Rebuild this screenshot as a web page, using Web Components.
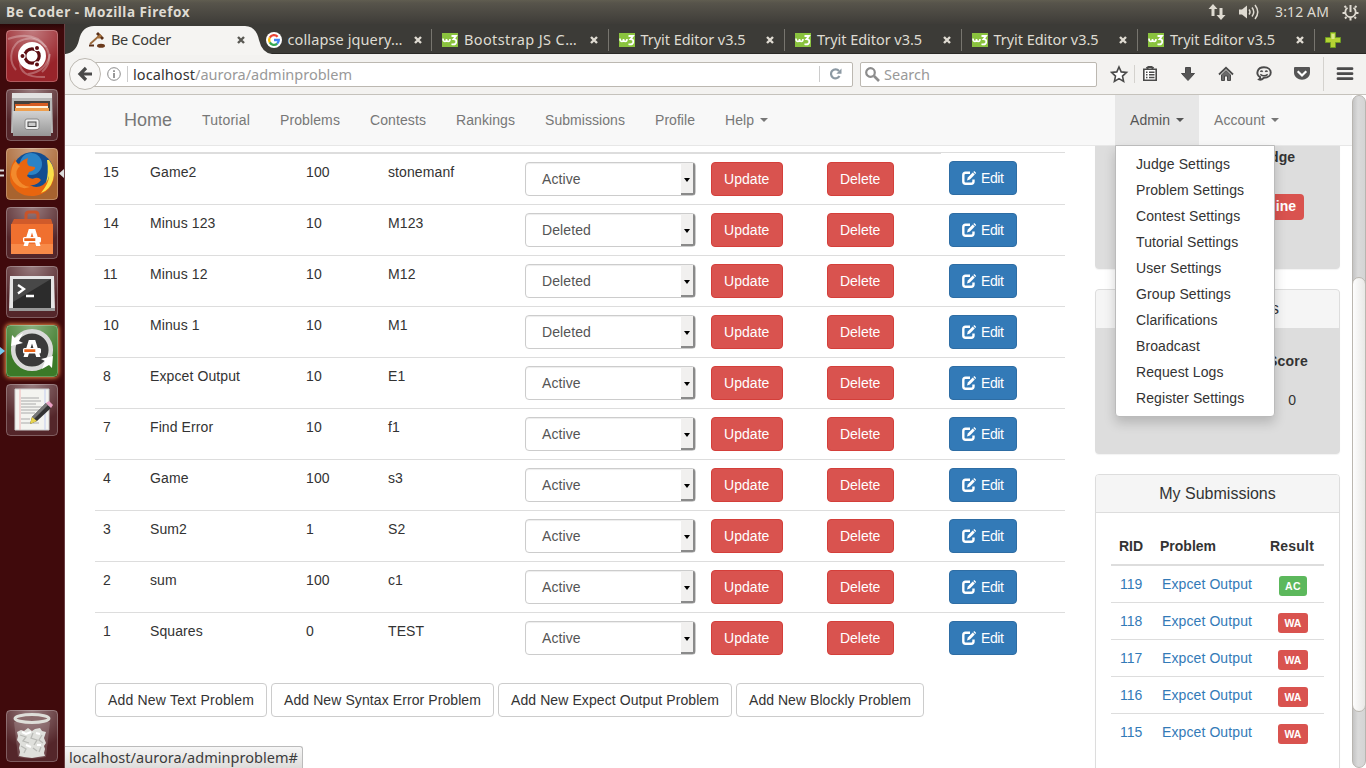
<!DOCTYPE html>
<html lang="en"><head><meta charset="utf-8"><title>Be Coder</title>
<style>
html,body{margin:0;height:100%;overflow:hidden;background:#fff}
body{width:1366px;height:768px;font-family:"Liberation Sans",Arial,sans-serif}
</style></head><body>
<be-desktop></be-desktop>
<script>
const def=(name,css,html,after)=>customElements.define(name,class extends HTMLElement{
  connectedCallback(){
    if(this.shadowRoot)return;
    const r=this.attachShadow({mode:'open'});
    r.innerHTML='<style>*{box-sizing:border-box}'+css+'</style>'+(typeof html==='function'?html(this):html);
    if(after)after(this,r);
  }
});
const UI='font-family:"Noto Sans","Open Sans",sans-serif;';

/* Text spaced to a fixed run length */
def('fit-text',':host{display:inline-block;white-space:nowrap}span{display:inline-block}','<span><slot></slot></span>',(el,r)=>{
  const w=+el.getAttribute('w'),s=r.querySelector('span'),n=el.textContent.length;
  el.style.width=w+'px';
  s.style.letterSpacing=((w-s.getBoundingClientRect().width)/n)+'px';
});
const fit=(t,w)=>`<fit-text w="${w}">${t}</fit-text>`;

def('top-panel',`:host{display:flex;align-items:center;height:24px;padding:0 7px 0 6px;background:linear-gradient(#605d50 0,#57544b 3px,#3e3c38);color:#dfdbd2;${UI}font-size:14px;line-height:24px}
b{flex:1;font-weight:700;font-size:13.5px}svg{display:block;margin-right:13px}.t{margin-right:13px}.p{margin:0}`,
`<b><fit-text w="184">Be Coder - Mozilla Firefox</fit-text></b>
<svg width="18" height="18" viewBox="0 0 18 18" fill="#dfdbd2"><path d="M5 1 .5 6H3.500v7h3V6h3zM13 17l-4.500-5h3V5h3v7h3z"/></svg>
<svg style="margin-right:15px" width="21" height="16" viewBox="0 0 21 16"><path d="M0 5.500h3L8 1.500v13L3 10.500H0z" fill="#dfdbd2"/><path d="M10 5.500q2 2.500 0 5M13 3.500q3.500 4.500 0 9M16 1q5.500 7 0 14" fill="none" stroke="#dfdbd2" stroke-width="1.500"/></svg>
<fit-text class="t" w="54">3:12 AM</fit-text>
<svg class="p" width="17" height="18" viewBox="-8.500 -9 17 18" fill="none" stroke="#dfdbd2"><path d="M-3-4.200A5.200 5.200 0 1 0 3-4.200" stroke-width="1.800"/><path d="M0-7V0" stroke-width="2"/><path d="M-4.500-4.500-6-6M4.500-4.500 6-6M-5.500 1H-8M5.500 1H8M-4 5-5.500 6.500M4 5 5.500 6.500M0 6v2.500" stroke-width="2"/></svg>`);

const A='<path d="M17.500 39 22.800 22h6.400l5.300 17h-4.300L26 25.500 21.800 39z" fill="#fff"/><rect x="17" y="30" width="18" height="5.400" rx="1.500" fill="#fff"/><path d="M18.300 31.300h11v2.700h-11z" fill="#e8641b"/>';
const icons={
dash:`<g fill="none" stroke="#fff" stroke-opacity=".28" stroke-width="2"><path d="M10 40A20 20 0 0 1 12 12Q28 3 40 17q8 14-4 25"/><path d="M2 9q26-9 38 8M14 30q-2 18 25 17M44 24q-4 18-22 20"/></g><circle cx="26" cy="26" r="14" fill="#fff"/><circle cx="26" cy="26" r="7.200" fill="none" stroke="#5c0d12" stroke-width="3.200"/><g stroke="#fff" stroke-width="1.200" fill="#5c0d12"><circle cx="16.500" cy="26" r="2.600"/><circle cx="31" cy="18" r="2.600"/><circle cx="31" cy="34.500" r="2.600"/></g>`,
files:`<path d="M6 4h40l1 40H5z" fill="#b8b8b8"/><path d="M6 4h40v5H6z" fill="#e2e2e2"/><path d="M8 12h36v12H8z" fill="#43403d"/><path d="M9 15h14l2-1h17v9H9z" fill="#d65c22"/><path d="M10 17h32v2H10z" fill="#fff1da"/><path d="M9 19h34v4H9z" fill="#ee9e4d"/><path d="M7 22h38v25H7z" fill="url(#m)"/><rect x="19" y="30" width="14" height="10.500" rx="2" fill="#eee" stroke="#888"/><rect x="22" y="33" width="8" height="4.500" fill="#ccc" stroke="#444"/>`,
fox:`<circle cx="27" cy="25" r="21" fill="#134d90"/><circle cx="25" cy="16" r="11" fill="#2b83c6"/><path d="M40 9q10 10 7.500 23-4 14-19.500 16-17 1-23.500-14Q2 22 9 11q1 4 4 5 3-4 9-6-2 5 1 8l6 1q1 3-6 5l-2 4q4 4 8 2 4-1 6 2-4 6-11 5 6 4 13 0 9-6 8-22z" fill="#e8650f"/><path d="M43 12q7 9 4 20-3 10-12 13 8-10 8-17-1 4-3 7 3-11 1-23" fill="#fbe04a"/><path d="M5 27q0-9 5-14 1 4 4 5-5 4-3 11 4 9 13 10-8 3-13-2-5-4-6-10" fill="#f38a2c"/>`,
bag:`<path d="M20 16V8q0-3 3-3h6q3 0 3 3v8" fill="none" stroke="#c8542a" stroke-width="3"/><path d="M8 12h37l2 6H5z" fill="#d05a2a"/><path d="M5 17h42v30H5z" fill="#f0702f"/><path d="M5 37h42v10H5z" fill="#f88a48"/>${A}`,
term:`<path d="M4 10h44l1 35H3z" fill="#e6e6e6"/><path d="M3 42h46v3H3z" fill="#999"/><path d="M7 13h38v29H7z" fill="#2c2c2c"/><path d="M7 13h38L7 36z" fill="#484848"/><path d="m12 19 6 4-6 4.500M20 30h8" fill="none" stroke="#fff" stroke-width="2.300"/>`,
upd:`<circle cx="26" cy="25" r="17" fill="#3a3a3a"/><circle cx="26" cy="25" r="18.800" fill="none" stroke="#d9d9d9" stroke-width="4.500"/><path d="m5 21 1-11 3 3 8-5-4 8 4 2zM47 31l-1 12-3-3-7 4 3-8-4-2z" fill="#fff"/><g transform="translate(0 -7)">${A}</g>`,
edit:`<path d="M9 5h34v41H9z" fill="#f4f4f0" stroke="#ccc"/><path d="M14 5v41" stroke="#f2b6b6"/><path d="M39 5v41" stroke="#c4cdf0"/><path d="M15 14h18M15 17h20M15 20h15M15 23h21M15 26h20M15 29h14M15 35h9M15 39h18" stroke="#aaa"/><path d="m24 40 2-7L40 19l5 5-14 13z" fill="#333"/><path d="m26 33 14-14 2 2-14 14z" fill="#777"/><path d="m24 40 2-7 5 4z" fill="#e8d44d"/><path d="m40 19 3-2 4 4-2 3z" fill="#e9a0c4"/>`,
trash:`<path d="m8 12 4 35q14 3 28 0l4-35z" fill="#fff" opacity=".16"/><ellipse cx="26" cy="8.500" rx="17" ry="4" fill="#8a6a6b" stroke="#deded9" stroke-width="3"/><path d="m11 22 4-2 3 1 4-3 4 3 3-2 5-1 2 3 4 1-2 6 2 5-2 3 1 3-1 4 1 3-7 1-6 1-8-1-5-1 1-4-1-4 1-4-3-4 1-4z" fill="#dfe0dc"/><path d="m14 25 6 2-3 4 6 2M27 23l-2 5 6 2-3 5M36 25l-3 5 4 3M15 36l5 3-2 4M27 38l4 3M35 37l-2 5" fill="none" stroke="#b9bab6" stroke-width="1.300"/><path d="m16 22 4 2 5-2M30 23l4 1M20 35l5 2M31 35h4" stroke="#fff" stroke-width="2" fill="none"/>`};
def('launch-tile',':host{display:block;position:relative;width:52px;height:52px}svg{display:block;border-radius:4px}.l,.r{position:absolute;left:-6px;top:50%}',el=>{
 const k=el.getAttribute('k'),bg={dash:'#99242a',fox:'#a8632f',upd:'#3b7a28'}[k]||'#54262a';
 return `<svg width="52" height="52" viewBox="0 0 52 52"><defs><linearGradient id="m" x2="0" y2="1"><stop stop-color="#d2d2d2"/><stop offset="1" stop-color="#969696"/></linearGradient><radialGradient id="g" cx=".5" cy="0" r=".75"><stop stop-color="#fff" stop-opacity=".4"/><stop offset="1" stop-color="#fff" stop-opacity="0"/></radialGradient></defs><rect width="52" height="52" rx="4" fill="${bg}"/><rect width="52" height="52" fill="url(#g)"/>${icons[k]}<rect x=".5" y=".5" width="51" height="51" rx="4" fill="none" stroke="#fff" stroke-opacity=".25"/></svg>`
 +(k==='fox'?'<svg class="l" style="margin-top:-5px;border-radius:0" width="64" height="9"><path d="M0 1.500h4M0 6.500h4" stroke="#ddd" stroke-width="2"/><path d="M64 0v9l-5-4.500z" fill="#ddd"/></svg>':'')
 +(k==='upd'?'<svg class="l" style="margin-top:-4px;border-radius:0" width="6" height="8"><path d="M0 0v8l5-4z" fill="#77c8ee"/></svg>':'');
},(el)=>{if(el.getAttribute('k')==='upd'){el.style.boxShadow='0 0 4px 1px #f08a48';el.style.borderRadius='4px'}});

def('side-launcher',`:host{display:flex;flex-direction:column;gap:7px;width:65px;height:744px;padding:6px 0 6px 6px;background:linear-gradient(#2a0607,#400a0c 6px);border-right:1px solid #6c4044}.s{flex:1}`,
 ['dash','files','fox','bag','term','upd','edit'].map(k=>`<launch-tile k="${k}"></launch-tile>`).join('')+'<div class="s"></div><launch-tile k="trash"></launch-tile>');

const fav={
g:'<svg width="16" height="16" viewBox="0 0 16 16"><circle cx="8" cy="8" r="8" fill="#fff"/><g fill="none" stroke-width="2.300"><path d="M3.800 5.600A4.800 4.800 0 0 1 11.600 4.800" stroke="#ea4335"/><path d="M3.800 10.400a4.800 4.800 0 0 1 0-4.800" stroke="#fbbc05"/><path d="M11.200 11.600a4.800 4.800 0 0 1-7.400-1.200" stroke="#34a853"/><path d="M8 8h4.800a4.800 4.800 0 0 1-1.600 3.600" stroke="#4285f4"/></g></svg>',
j:'<svg width="16" height="16" viewBox="0 0 16 16"><path d="m1 12 9-8" stroke="#9a6a3c" stroke-width="1.700"/><path d="m7 2 2-2 6 6-2 2z" fill="#5a3018"/><path d="M8 5l3-3 2 2-3 3z" fill="#a8713b"/><ellipse cx="12" cy="13.700" rx="4" ry="2" fill="#6b3a1c"/><path d="M0 13.500h5" stroke="#5a3018" stroke-width="2"/></svg>',
w:'<svg width="16" height="14" viewBox="0 0 16 14"><path d="M0 0h16v14H0z" fill="#8ac33e"/><path d="M1 5.500q0 3 2 3 1.500 0 1.500-2.500 0 2.500 1.700 2.500 1.800 0 1.800-2.500" fill="none" stroke="#fff" stroke-width="1.600"/><path d="M9.500 3h4.500l-2.500 3.200q3.200 0 2.700 3-.8 2.900-4.700 2" fill="none" stroke="#fff" stroke-width="1.800"/></svg>'};
def('browser-tab',`:host{display:flex;flex:none;align-items:center;position:relative;width:176.500px;height:30px;padding:2px 11px 0 10px;color:#dfdbd2;${UI}font-size:14.500px;line-height:20px}
.i{display:flex;width:16px;margin-right:6px}.t{flex:1;margin-top:-2px}.x{display:block}:host(:not([on]))::after{content:"";position:absolute;right:0;top:5px;width:1px;height:22px;background:#77756f}
:host([on]){width:190.500px;padding-left:24px;color:#3c3b37}`,
el=>`<span class="i">${fav[el.getAttribute('f')]}</span><span class="t"><slot></slot></span><svg class="x" width="8" height="8" viewBox="0 0 8 8"><path d="m1 1 6 6M7 1 1 7" stroke="${el.hasAttribute('on')?'#5a5954':'#dfdbd2'}" stroke-width="2.400"/></svg>`);
def('tab-strip',`:host{display:flex;position:relative;height:30px;background:#3c3b37;border-bottom:1px solid #2a2926}.c{position:absolute;left:0;top:1px}.p{margin:8px 0 0 10px}`,
`<svg class="c" width="210" height="30"><path d="M0 29Q11 28 14 15 17 1 29 1H180Q191 1 194 15 197 28 207 29V30H0z" fill="#f5f4f2"/></svg>
<browser-tab on f="j"><fit-text w="60">Be Coder</fit-text></browser-tab>
<browser-tab f="g" style="padding-right:10px"><fit-text w="115">collapse jquery…</fit-text></browser-tab>
<browser-tab f="w"><fit-text w="113">Bootstrap JS C…</fit-text></browser-tab>
${'<browser-tab f="w"><fit-text w="105">Tryit Editor v3.5</fit-text></browser-tab>'.repeat(4)}
<svg class="p" width="16" height="16" viewBox="0 0 16 16"><path d="M5.500.5h5v5h5v5h-5v5h-5v-5h-5v-5h5z" fill="#b5d334" stroke="#6f9c22"/><path d="M6.500 2h3v5h-3z" fill="#dbe98c"/></svg>`);

def('nav-toolbar',`:host{display:flex;align-items:center;height:41px;padding-left:4px;background:#f3f2f0;border-bottom:1px solid #c5c2bc;${UI}font-size:14.500px;color:#999}
.back{display:block;flex:none;position:relative;z-index:1;margin-right:-16px}
.url{display:flex;align-items:center;width:770px;height:25px;padding:0 9px 0 25px;margin-left:-2px;background:#fff;border:1px solid #bcb8b1;border-radius:2px}.url,.sr{line-height:20px}
.url i{width:1px;height:16px;background:#ccc;margin:0 5px 0 6px}.url span{flex:1}.url em{font-style:normal;color:#333}
.sr{display:flex;align-items:center;width:237px;height:25px;margin:0 13px 0 7px;padding-left:4px;background:#fff;border:1px solid #bcb8b1;border-radius:2px}
.ic{display:block;flex:none}`,
`<svg class="back" width="32" height="34" viewBox="0 0 32 34"><circle cx="16" cy="17" r="15.500" fill="#f8f7f6" stroke="#bcb8b1"/><path d="M17 11l-6 6 6 6M11 17h12" fill="none" stroke="#4a4a4a" stroke-width="3.200"/></svg>
<div class="url"><svg width="14" height="14" viewBox="0 0 14 14" style="margin-left:-2px"><circle cx="7" cy="7" r="6.300" fill="none" stroke="#8a8a8a"/><path d="M7 6v5M7 3.200v1.700" stroke="#777" stroke-width="1.500"/></svg><i></i><span><em><fit-text w="62">localhost</fit-text></em><fit-text w="157">/aurora/adminproblem</fit-text></span><i style="margin:0 10px 0 0"></i>
<svg width="12" height="12" viewBox="0 0 12 12" style="margin-right:1px"><path d="M9.500 8A4.500 4.500 0 1 1 9 3" fill="none" stroke="#8c99a3" stroke-width="2.200"/><path d="M11.500.5v5.200H6.300z" fill="#8c99a3"/></svg></div>
<div class="sr"><svg width="15" height="15" viewBox="0 0 15 15" style="margin-right:4px"><circle cx="5.500" cy="5.500" r="4.300" fill="none" stroke="#8c8c8c" stroke-width="2.200"/><path d="m9 9 5 5" stroke="#8c8c8c" stroke-width="2.600"/></svg><fit-text w="46">Search</fit-text></div>
<svg class="ic" width="256" height="40" viewBox="1110 54 256 40" fill="none" stroke="#4a4a4a" stroke-width="1.600"><path d="m1119 67 2.200 4.900 5.300.5-4 3.700 1.100 5.300-4.600-2.800-4.600 2.800 1.100-5.300-4-3.700 5.300-.5z" fill="#fff"/><path d="M1134.500 65v18M1323.500 57v34" stroke="#d4d2ce" stroke-width="1"/><path d="M1143.800 69.300h12.400v11h-12.400z" fill="#fff"/><path d="M1146.500 68.500l2-1.500h3l2 1.500" stroke-width="2.200"/><path d="M1146 72.200h1.500M1149 72.200h5.500M1146 74.800h1.500M1149 74.800h5.500M1146 77.500h1.500M1149 77.500h5.500" stroke-width="1.400"/><path d="M1185.500 67.500h5v6h4l-6.500 7-6.500-7h4z" fill="#555" stroke-width="1"/><path d="M1221.500 75v5.500h3v-4.500h3v4.500h3v-5.500l-4.500-4.500z" fill="#6a6a6a" stroke-width="1"/><path d="m1219 74.500 7-6.700 7 6.700" stroke-width="1.800"/><path d="M1264 67.300c9 0 9 10.500 0 10.500-2 1.800-4 2.200-5 1.700 1-.7 1.300-1.400 1.200-2.400-5-3-3-9.800 3.800-9.800z" stroke-width="1.900"/><path d="M1260.500 71.800q1-1.500 2.200 0M1265.300 71.800q1-1.500 2.200 0M1260.300 74.300q3.700 3 7.400 0" stroke-width="1.500"/><path d="M1295 67h14q1 0 1 1v4.500c0 9.500-16 9.500-16 0V68q0-1 1-1z" fill="#555" stroke="none"/><path d="m1297.700 71.200 4.300 4.300 4.300-4.300" stroke="#fff" stroke-width="2.200"/><path d="M1338 68.700h14M1338 73.700h14M1338 78.700h14" stroke-width="2.800" stroke-linecap="round"/></svg>`);

def('nav-item',`:host{display:flex;align-items:center;height:50px;padding:0 15px;color:#777;font-size:14px;line-height:20px;white-space:nowrap}:host([brand]){font-size:18px}:host([open]){background:#e7e7e7;color:#555}
i{border:4px solid transparent;border-top-color:currentColor;border-bottom:0;margin-left:6px}`,el=>`<slot></slot>${el.hasAttribute('caret')?'<i></i>':''}`);
def('drop-menu',`:host{display:block;position:absolute;left:0;top:50px;width:160px;height:272px;padding:5px 0;background:#fff;border:1px solid #bbb;border-radius:0 0 4px 4px;box-shadow:0 6px 12px rgba(0,0,0,.175);z-index:5}div{padding:3px 20px;font-size:14px;line-height:20px;color:#333;white-space:nowrap;letter-spacing:.1px}`,
 ['Judge Settings','Problem Settings','Contest Settings','Tutorial Settings','User Settings','Group Settings','Clarifications','Broadcast','Request Logs','Register Settings'].map(t=>`<div>${t}</div>`).join(''));
def('site-nav',`:host{display:flex;position:relative;z-index:4;height:51px;flex:none;padding:0 58px 0 44px;background:#f8f8f8;border-bottom:1px solid #e7e7e7}.s{flex:1}.d{position:relative}`,
`<nav-item brand>${fit('Home',48)}</nav-item>${[['Tutorial',48],['Problems',60],['Contests',56],['Rankings',59],['Submissions',80],['Profile',40]].map(t=>`<nav-item>${fit(...t)}</nav-item>`).join('')}<nav-item caret>${fit('Help',29)}</nav-item><div class="s"></div><div class="d"><nav-item open caret>${fit('Admin',40)}</nav-item><drop-menu></drop-menu></div><nav-item caret>${fit('Account',51)}</nav-item>`);

def('bs-button',`:host{display:inline-flex;align-items:center;height:34px;padding:0 12px;border:1px solid #ccc;border-radius:4px;background:#fff;color:#333;font-size:14px;line-height:20px;white-space:nowrap}
:host([t=red]){background:#d9534f;border-color:#d43f3a;color:#fff}:host([t=blue]){background:#337ab7;border-color:#2e6da4;color:#fff}`,'<slot></slot>');
def('status-select',`:host{display:flex;width:171px;height:34px;padding-left:16px;border:1px solid #ccc;border-radius:4px;background:#fff;box-shadow:inset 0 1px 1px rgba(0,0,0,.075);color:#555;font-size:14px;line-height:32px}span{flex:1}
i{display:flex;align-items:center;justify-content:center;width:14px;background:#f1f0ef;border-right:2px solid #8a8a8a;border-bottom:2px solid #8a8a8a;border-radius:0 2px 2px 0}b{margin-top:3px;border:3px solid transparent;border-top:4px solid #000;border-bottom:0}`,'<span><slot></slot></span><i><b></b></i>');
def('problem-row',`:host{display:grid;grid-template-columns:47px 156px 82px 137px 186px 116px 122px 1fr;height:51px;padding-left:8px;border-top:1px solid #ddd;font-size:14px;line-height:20px;color:#333;align-items:start;letter-spacing:.1px}
:host([first]){height:50px;border-top:0}
span{padding-top:8px}bs-button,status-select{margin-top:8px;justify-self:start}status-select{margin-left:0}svg{display:block;margin-right:5px}`,
el=>{const d=el.getAttribute('d').split('|');return d.slice(0,4).map(t=>`<span>${t}</span>`).join('')+`<status-select>${d[4]}</status-select><bs-button t="red">${fit('Update',46)}</bs-button><bs-button t="red">${fit('Delete',41)}</bs-button><bs-button t="blue"${el.hasAttribute('first')?' style="margin-top:7px"':''}><svg width="14" height="14" viewBox="0 0 14 14"><path d="M8 1.800H3.500Q1.300 1.800 1.300 4v6.500q0 2.200 2.200 2.200h5.800q2.200 0 2.200-2.200V8.500" fill="none" stroke="#fff" stroke-width="2.400"/><path d="m5 9.500.8-3L10.700 1.500l2.100 2.100L7.900 8.600z" fill="#fff"/><path d="m11.300 1 1-1L14.200 2l-1 1z" fill="#fff"/></svg>${fit('Edit',23)}</bs-button>`});
def('problem-table',`:host{display:block;width:969.500px;margin-right:.5px}.h{height:2px;background:linear-gradient(#ddd,#ddd) 0 0/846px 2px no-repeat,linear-gradient(#ddd,#ddd) 0 0/100% 1px no-repeat}.b{display:flex;gap:4px;margin-top:20px}`,
 '<div class="h"></div>'+['15|Game2|100|stonemanf|Active','14|Minus 123|10|M123|Deleted','11|Minus 12|10|M12|Deleted','10|Minus 1|10|M1|Deleted','8|Expcet Output|10|E1|Active','7|Find Error|10|f1|Active','4|Game|100|s3|Active','3|Sum2|1|S2|Active','2|sum|100|c1|Active','1|Squares|0|TEST|Active'].map((d,i)=>`<problem-row ${i?'':'first'} d="${d}"></problem-row>`).join('')
 +'<div class="b">'+[['Add New Text Problem',146],['Add New Syntax Error Problem',197],['Add New Expect Output Problem',208],['Add New Blockly Problem',162]].map(t=>`<bs-button>${fit(...t)}</bs-button>`).join('')+'</div>');

def('side-panel',`:host{display:block;width:245px;border:1px solid #ddd;border-radius:4px;background:#fff;box-shadow:0 1px 1px rgba(0,0,0,.05);font-size:14px;line-height:20px;color:#333;overflow:hidden}:host([grey]){background:#ddd}
.h{height:38px;background:#f5f5f5;text-align:center;font-size:16px;line-height:37px}:host(:not([grey])) .h{border-bottom:1px solid #ddd}`,
 el=>(el.hasAttribute('head')?'<div class="h"><slot name="head"></slot></div>':'')+'<slot></slot>');
def('submission-row',`:host{display:grid;grid-template-columns:42px 117px 1fr;height:37px;padding-left:9px;border-top:1px solid #ddd;font-size:14px;line-height:20px;color:#337ab7;align-items:start}
span{padding-top:8px}b{justify-self:start;margin:10px 0 0 -1px;width:30px;height:20px;border-radius:3px;background:#d9534f;color:#fff;font-size:10.500px;line-height:20px;text-align:center}b.AC{background:#5cb85c;width:28px;margin-left:0}:host([first]){border:0;height:36px}:host([first]) b{margin-top:10px}:host([first]) span{padding-top:7.500px}`,
 el=>{const[i,r]=el.getAttribute('d').split('|');return `<span>${i}</span><span>${fit('Expcet Output',90)}</span><b class="${r}"><fit-text w="${r==='AC'?16:17}">${r}</fit-text></b>`});
def('site-sidebar',`:host{display:flex;flex-direction:column;gap:20px;width:245px;font-size:14px;line-height:20px;color:#333}
.p1{height:183px;margin-top:-60px}.p1 .j{margin:60px 0 0;padding-right:44px;text-align:right;font-weight:700}
.o{display:block;width:62px;height:26px;margin:27px 0 0 146px;background:#d9534f;border-radius:4px;color:#fff;font-weight:700;line-height:24px;text-align:right;padding-right:8px}
.p2{height:165px}.s{padding:0 60px 0 0;display:block;text-align:right}.c{text-align:right;font-weight:700;padding:23px 31px 0 0}.z{text-align:right;padding:19px 43px 0 0}
.p3{height:320px}.t{padding:23px 15px}.th{display:grid;grid-template-columns:41px 110px 1fr;padding-left:8px;height:30px;border-bottom:2px solid #ddd;font-weight:700}`,
`<side-panel grey class="p1"><div class="j">Judge</div><span class="o">Offline</span></side-panel>
<side-panel grey head class="p2"><span slot="head" class="s">s</span><div class="c">${fit('Score',40)}</div><div class="z">0</div></side-panel>
<side-panel head class="p3"><span slot="head">My Submissions</span><div class="t"><div class="th"><span>RID</span><span>Problem</span><span>${fit('Result',44)}</span></div>${['119|AC','118|WA','117|WA','116|WA','115|WA'].map((d,i)=>`<submission-row ${i?'':'first'} d="${d}"></submission-row>`).join('')}</div></side-panel>`);
def('web-page',`:host{display:flex;flex-direction:column;width:1287px;height:673px;overflow:hidden;background:#fff;position:relative}
.m{display:flex;gap:30px;padding:0 0 0 30px}problem-table{margin-top:6px}`,'<site-nav></site-nav><div class="m"><problem-table></problem-table><site-sidebar></site-sidebar></div>');
def('page-scroll',`:host{display:block;width:14px;height:673px;padding-top:181px;background:linear-gradient(90deg,#c4c4c4,#dadada 5px,#d4d4d4);border:1px solid #b8b5b0;border-radius:7px}div{width:14px;height:435px;margin-left:-1px;border:1px solid #bbb7b0;border-radius:7px;background:linear-gradient(90deg,#fdfdfd,#e9e8e6)}`,'<div></div>');
def('status-tip',`:host{display:block;position:absolute;left:65px;bottom:0;width:238px;height:22px;padding-left:4px;background:linear-gradient(#f6f6f6,#dedddb);border:1px solid #bbb;border-left:0;border-bottom:0;border-radius:0 3px 0 0;color:#3c3c3c;${UI}font-size:14.500px;line-height:21px}`,'<fit-text w="229">localhost/aurora/adminproblem#</fit-text>');
def('be-desktop',`:host{display:block;position:relative;width:1366px;height:768px;overflow:hidden}.r,.v{display:flex}.w{width:1301px}`,
 '<top-panel></top-panel><div class="r"><side-launcher></side-launcher><div class="w"><tab-strip></tab-strip><nav-toolbar></nav-toolbar><div class="v"><web-page></web-page><page-scroll></page-scroll></div></div></div><status-tip></status-tip>');
</script></body></html>
